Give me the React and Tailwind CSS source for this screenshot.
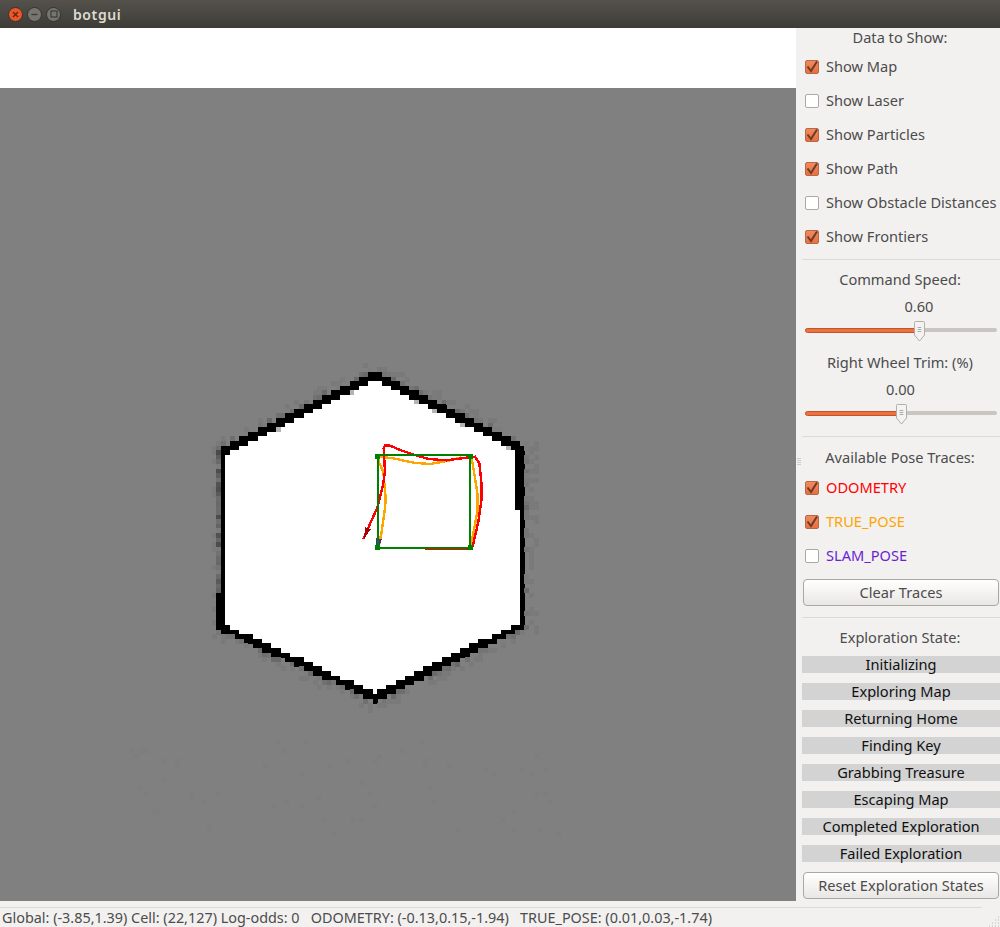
import { useMemo } from 'react';

const CELL = 4.6;
const HEX = [[375, 376], [522.5, 450], [522.5, 625], [375, 697], [223.5, 628], [223.5, 452]];

function hash(i, j) {
  const s = Math.sin(i * 127.1 + j * 311.7) * 43758.5453;
  return s - Math.floor(s);
}

// signed distance to the convex hexagon, negative is inside
function hexDist(x, y) {
  let d = -Infinity;
  HEX.forEach((a, k) => {
    const b = HEX[(k + 1) % HEX.length];
    const ex = b[0] - a[0];
    const ey = b[1] - a[1];
    const len = Math.hypot(ex, ey);
    d = Math.max(d, ((x - a[0]) * ey - (y - a[1]) * ex) / len);
  });
  return d;
}

function buildCells() {
  const cells = [];
  for (let i = 28; i < 130; i++) {
    for (let j = 0; j < 177; j++) {
      const x = i * CELL;
      const y = j * CELL - 1.2;
      const cx = x + CELL / 2;
      const cy = y + CELL / 2 + 88;
      const d = hexDist(cx, cy);
      const n = hash(i, j);
      let fill = null;
      const thickRight = i === 112 && cy > 452 && cy < 510;
      const thickLeft = i === 47 && cy > 592 && cy < 628;
      const onWall = Math.abs(d) < 3.9 && cy > 372 && cy < 701;
      const slanted = cy < 450 || cy > 625;
      if (onWall || thickRight || thickLeft) fill = '#000000';
      else if (d < 0) fill = slanted && d > -5.2 && n > 0.88 ? '#b4b4b4' : '#ffffff';
      else if (i === 47 && cy > 452 && cy < 628) {
        const v = Math.round(70 + n * 55);
        fill = `rgb(${v},${v},${v})`;
      } else if (d < 8 && n > 0.35) {
        const v = Math.round(92 + n * 34);
        fill = `rgb(${v},${v},${v})`;
      } else if (d < 14 && n > 0.6) fill = '#7a7a7a';
      else if (cy > 740 && cy < 835 && cx > 90 && cx < 560 && n > 0.97) fill = '#7e7e7e';
      if (fill) cells.push({ x, y: y + 88, fill });
    }
  }
  return cells;
}

// points were read off a 3x crop starting at (350,435)
const p = (pts) => pts.map(([x, y]) => `${350 + x / 3},${435 + y / 3}`).join(' ');

const RED = p([[40, 312], [62, 262], [82, 218], [98, 155], [105, 110], [101, 40], [105, 32], [120, 32], [150, 45], [195, 60], [235, 72], [290, 76], [350, 68], [375, 65], [388, 85], [395, 150], [395, 190], [385, 260], [368, 335]]);
const RED_BOTTOM = p([[225, 342], [360, 342]]);
const ORANGE = p([[85, 340], [95, 290], [105, 220], [107, 190], [100, 110], [88, 85], [85, 65], [130, 70], [190, 83], [240, 87], [290, 78], [330, 68], [365, 70], [372, 110], [383, 180], [382, 230], [370, 295], [360, 335]]);

function MapView() {
  const cells = useMemo(buildCells, []);
  return (
    <svg width="796" height="813" viewBox="0 88 796 813" className="block">
      <rect x="0" y="88" width="796" height="813" fill="#808080" />
      <g shapeRendering="crispEdges">
        {cells.map((c, idx) => (
          <rect key={idx} x={c.x} y={c.y} width={CELL + 0.3} height={CELL + 0.3} fill={c.fill} />
        ))}
        <polyline points={ORANGE} fill="none" stroke="#ffa500" strokeWidth="2.4" />
        <polyline points={RED} fill="none" stroke="#ff0000" strokeWidth="2.4" />
        <polyline points={RED_BOTTOM} fill="none" stroke="#ff0000" strokeWidth="1.5" />
        <polygon points={p([[42, 312], [46, 276], [62, 283]])} fill="#a80000" />
        <polygon points={p([[78, 310], [95, 312], [88, 335], [78, 335]])} fill="#4b2a9a" />
        <rect x="377.6" y="455" width="92.4" height="92.8" fill="none" stroke="#008000" strokeWidth="2" />
        <rect x="375" y="454" width="5" height="5" fill="#008000" />
        <rect x="467.5" y="454" width="5" height="5" fill="#008000" />
        <rect x="375" y="545" width="5" height="5" fill="#008000" />
        <rect x="467.5" y="545" width="5" height="5" fill="#008000" />
      </g>
    </svg>
  );
}

function WindowButton({ className, children }) {
  return (
    <div className={`w-[15px] h-[15px] rounded-full flex items-center justify-center border border-[#33322e] ${className}`}>
      {children}
    </div>
  );
}

function TitleBar() {
  return (
    <div className="h-[28px] flex items-center bg-gradient-to-b from-[#55524c] to-[#3d3c37] pl-[8px] shrink-0">
      <div className="flex gap-[4px]">
        <WindowButton className="bg-[#e9572a]">
          <svg width="7" height="7" viewBox="0 0 7 7"><path d="M1 1l5 5M6 1L1 6" stroke="#5a2412" strokeWidth="1.2" /></svg>
        </WindowButton>
        <WindowButton className="bg-[#77756f]">
          <svg width="7" height="7" viewBox="0 0 7 7"><path d="M0.5 3.5h6" stroke="#3d3c37" strokeWidth="1.4" /></svg>
        </WindowButton>
        <WindowButton className="bg-[#77756f]">
          <svg width="8" height="8" viewBox="0 0 8 8"><rect x="1" y="1" width="6" height="6" fill="none" stroke="#3d3c37" strokeWidth="1.2" /></svg>
        </WindowButton>
      </div>
      <span className="ml-[12px] text-[14px] font-semibold tracking-[0.6px] text-[#dfdbd2]">botgui</span>
    </div>
  );
}

function Check({ label, checked, color = 'text-[#4c4c4c]' }) {
  return (
    <div className="h-[34px] flex items-center pl-[9px] shrink-0">
      {checked ? (
        <div className="w-[14px] h-[14px] rounded-[2px] bg-gradient-to-b from-[#f08a5d] to-[#e8703c] border border-[#b5694a] flex items-center justify-center shrink-0">
          <svg width="14" height="14" viewBox="0 0 14 14" className="shrink-0"><path d="M2.5 6.5l3.5 4.5 6-9.5" fill="none" stroke="#6b3b2b" strokeWidth="2" /></svg>
        </div>
      ) : (
        <div className="w-[14px] h-[14px] rounded-[2px] bg-white border border-[#aaa8a4] shrink-0" />
      )}
      <span className={`ml-[7px] mb-[2px] whitespace-nowrap ${color}`}>{label}</span>
    </div>
  );
}

function Slider({ percent, handleLeft }) {
  return (
    <div className="relative h-[20px] ml-[9px] shrink-0">
      <div className="absolute left-0 right-[3px] top-[7px] h-[4px] rounded-full bg-[#c9c6c1]" />
      <div className="absolute left-0 top-[7px] h-[5px] rounded-full bg-[#ea7240] border border-[#c4552a]" style={{ width: percent }} />
      <svg width="11" height="21" viewBox="0 0 12 21" preserveAspectRatio="none" className="absolute top-0" style={{ left: handleLeft }}>
        <path d="M1.5.5h9a1 1 0 0 1 1 1V14L6 20 .5 14V1.5a1 1 0 0 1 1-1z" fill="#f4f3f1" stroke="#aeaba6" />
        <path d="M4 6.5h4M4 8.5h4M4 10.5h4" stroke="#a8a6a1" strokeWidth="1" />
      </svg>
    </div>
  );
}

function Divider({ className = '' }) {
  return <div className={`h-px ml-[6px] bg-[#dcdad6] shrink-0 ${className}`} />;
}

function PanelButton({ label, className = '' }) {
  return (
    <div className={`mx-[7px] w-[196px] pb-[2px] rounded-[4px] border border-[#a9a7a3] bg-gradient-to-b from-[#ffffff] to-[#e9e7e4] flex items-center justify-center text-[#4c4c4c] shrink-0 ${className}`}>
      {label}
    </div>
  );
}

function Heading({ children, className = '' }) {
  return <div className={`h-[18px] pl-[4px] text-center whitespace-nowrap shrink-0 ${className}`}>{children}</div>;
}

const STATES = ['Initializing', 'Exploring Map', 'Returning Home', 'Finding Key', 'Grabbing Treasure', 'Escaping Map', 'Completed Exploration', 'Failed Exploration'];

function Sidebar() {
  return (
    <div className="relative w-[204px] h-[879px] shrink-0 flex flex-col text-[14.6px] leading-[16px] text-[#4c4c4c]">
      <div className="h-[22px] pb-[5px] pl-[4px] flex items-center justify-center shrink-0">Data to Show:</div>
      <Check label="Show Map" checked />
      <Check label="Show Laser" />
      <Check label="Show Particles" checked />
      <Check label="Show Path" checked />
      <Check label="Show Obstacle Distances" />
      <Check label="Show Frontiers" checked />
      <Divider className="mt-[5px]" />
      <Heading className="mt-[11px]">Command Speed:</Heading>
      <Heading className="mt-[9px] relative left-[19px]">0.60</Heading>
      <div className="mt-[5px]">
        <Slider percent="114px" handleLeft="109px" />
      </div>
      <Heading className="mt-[13px]">Right Wheel Trim: (%)</Heading>
      <Heading className="mt-[9px] pl-[5px]">0.00</Heading>
      <div className="mt-[5px]">
        <Slider percent="96px" handleLeft="91px" />
      </div>
      <Divider className="mt-[12px]" />
      <Heading className="mt-[12px]">Available Pose Traces:</Heading>
      <div className="mt-[4px]">
        <Check label="ODOMETRY" checked color="text-[#ff0000]" />
        <Check label="TRUE_POSE" checked color="text-[#ffa500]" />
        <Check label="SLAM_POSE" color="text-[#6a1fd0]" />
      </div>
      <PanelButton label="Clear Traces" className="h-[27px] mt-[6px]" />
      <Divider className="mt-[11px]" />
      <Heading className="mt-[11px]">Exploration State:</Heading>
      <div className="mt-[9px] flex flex-col gap-[10px] pl-[6px] shrink-0">
        {STATES.map((s) => (
          <div key={s} className="h-[17px] pb-[2px] bg-[#d3d3d3] text-[#101010] flex items-center justify-center whitespace-nowrap">{s}</div>
        ))}
      </div>
      <PanelButton label="Reset Exploration States" className="h-[27px] mt-[10px]" />
      <div className="absolute left-[1px] top-[430px] flex flex-col gap-[1px]">
        <div className="w-[4px] h-px bg-[#cfcdc9]" />
        <div className="w-[4px] h-px bg-[#cfcdc9]" />
        <div className="w-[4px] h-px bg-[#cfcdc9]" />
        <div className="w-[4px] h-px bg-[#cfcdc9]" />
      </div>
    </div>
  );
}

export default function App() {
  return (
    <div className="relative w-[1000px] h-[927px] flex flex-col overflow-hidden bg-[#f2f1f0] font-['Noto_Sans',sans-serif]">
      <TitleBar />
      <div className="flex h-[879px]">
        <div className="w-[796px] shrink-0">
          <div className="h-[60px] bg-white" />
          <MapView />
        </div>
        <Sidebar />
      </div>
      <div className="flex-1 border-t border-[#dcdad6] mr-[18px] pl-[2px] text-[14.4px] leading-[19px] text-[#4c4c4c] whitespace-pre">
        {'Global: (-3.85,1.39) Cell: (22,127) Log-odds: 0   ODOMETRY: (-0.13,0.15,-1.94)   TRUE_POSE: (0.01,0.03,-1.74)'}
      </div>
      <svg width="12" height="12" viewBox="0 0 12 12" className="absolute right-0 bottom-0">
        <path d="M10 2h1M10 5h1M7 5h1M10 8h1M7 8h1M4 8h1M10 11h1M7 11h1M4 11h1M1 11h1" stroke="#bdbbb7" strokeWidth="1" />
      </svg>
    </div>
  );
}
